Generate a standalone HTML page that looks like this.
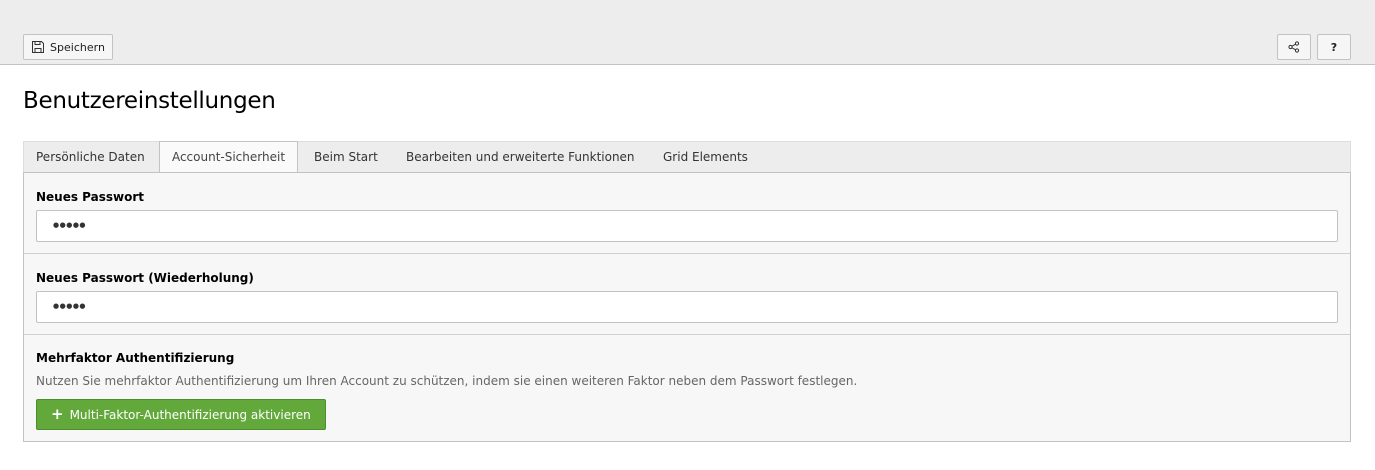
<!DOCTYPE html>
<html><head><meta charset="utf-8"><style>
*{box-sizing:border-box;margin:0;padding:0}
body{width:1375px;height:470px;background:#fff;font-family:"DejaVu Sans",Verdana,sans-serif;font-size:12px;color:#212121;position:relative;overflow:hidden}
.hdr{position:absolute;left:0;top:0;width:1375px;height:65px;background:#ededed;border-bottom:1px solid #c3c3c3}
.btn{position:absolute;height:26px;background:#f6f6f6;border:1px solid #c3c3c3;border-radius:2px;font-size:11px;display:flex;align-items:center;justify-content:center}
h1{position:absolute;left:23px;top:88px;font-size:23px;font-weight:normal;color:#000;font-family:"DejaVu Sans",sans-serif;letter-spacing:-0.3px}
.tabs{position:absolute;left:23px;top:141px;width:1328px;height:32px;background:#ededed;border:1px solid #ddd;border-bottom:none}
.tab{position:absolute;top:0;height:31px;line-height:30px;font-size:12px;color:#333}
.tab.act{background:#fafafa;border:1px solid #c3c3c3;border-bottom:none;height:32px;top:-1px;color:#444;text-align:center}
.panel{position:absolute;left:23px;top:172px;width:1328px;height:270px;border:1px solid #c3c3c3;background:#f7f7f7}
.sec{position:absolute;left:0;width:1326px;border-bottom:1px solid #d0d0d0}
.lbl{position:absolute;left:12px;font-weight:bold;font-size:12px;color:#000}
.inp{position:absolute;left:12px;width:1302px;height:32px;background:#fff;border:1px solid #c3c3c3;border-radius:2px;padding-left:16px;line-height:29px;font-size:7px;letter-spacing:0.5px;color:#333}
.green{position:absolute;left:12px;top:226px;width:290px;height:31px;background:#62a83b;border:1px solid #4e8d2e;border-radius:2px;color:#fff;font-size:12px;line-height:29px;padding-left:14px}
</style></head><body>
<div class="hdr">
 <div class="btn" style="left:23px;top:34px;width:90px">
  <svg width="14" height="14" viewBox="0 0 14 14" style="margin-right:5px"><path d="M1.5 1.5h9l2 2v9h-11z" fill="none" stroke="#333"/><path d="M4 1.5v3h5v-3M4 12.5v-4h6v4" fill="none" stroke="#333"/></svg>Speichern</div>
 <div class="btn" style="left:1277px;top:34px;width:34px">
  <svg width="12" height="12" viewBox="0 0 12 12"><circle cx="9" cy="2.5" r="1.6" fill="none" stroke="#333"/><circle cx="2.5" cy="6" r="1.6" fill="none" stroke="#333"/><circle cx="9" cy="9.5" r="1.6" fill="none" stroke="#333"/><path d="M4 5.2l3.6-2M4 6.8l3.6 2" stroke="#333"/></svg></div>
 <div class="btn" style="left:1317px;top:34px;width:34px;font-weight:bold">?</div>
</div>
<h1>Benutzereinstellungen</h1>
<div class="tabs">
 <div class="tab" style="left:12px">Persönliche Daten</div>
 <div class="tab act" style="left:135px;width:139px">Account-Sicherheit</div>
 <div class="tab" style="left:290px">Beim Start</div>
 <div class="tab" style="left:382px">Bearbeiten und erweiterte Funktionen</div>
 <div class="tab" style="left:639px">Grid Elements</div>
</div>
<div class="panel">
 <div class="sec" style="top:0;height:81px">
  <div class="lbl" style="top:17px">Neues Passwort</div>
  <div class="inp" style="top:37px">●●●●●</div>
 </div>
 <div class="sec" style="top:81px;height:81px">
  <div class="lbl" style="top:17px">Neues Passwort (Wiederholung)</div>
  <div class="inp" style="top:37px">●●●●●</div>
 </div>
 <div class="lbl" style="top:178px">Mehrfaktor Authentifizierung</div>
 <div style="position:absolute;left:12px;top:201px;color:#666;font-size:12px">Nutzen Sie mehrfaktor Authentifizierung um Ihren Account zu schützen, indem sie einen weiteren Faktor neben dem Passwort festlegen.</div>
 <div class="green"><b style="font-size:15px;margin-right:6px">+</b>Multi-Faktor-Authentifizierung aktivieren</div>
</div>
</body></html>
